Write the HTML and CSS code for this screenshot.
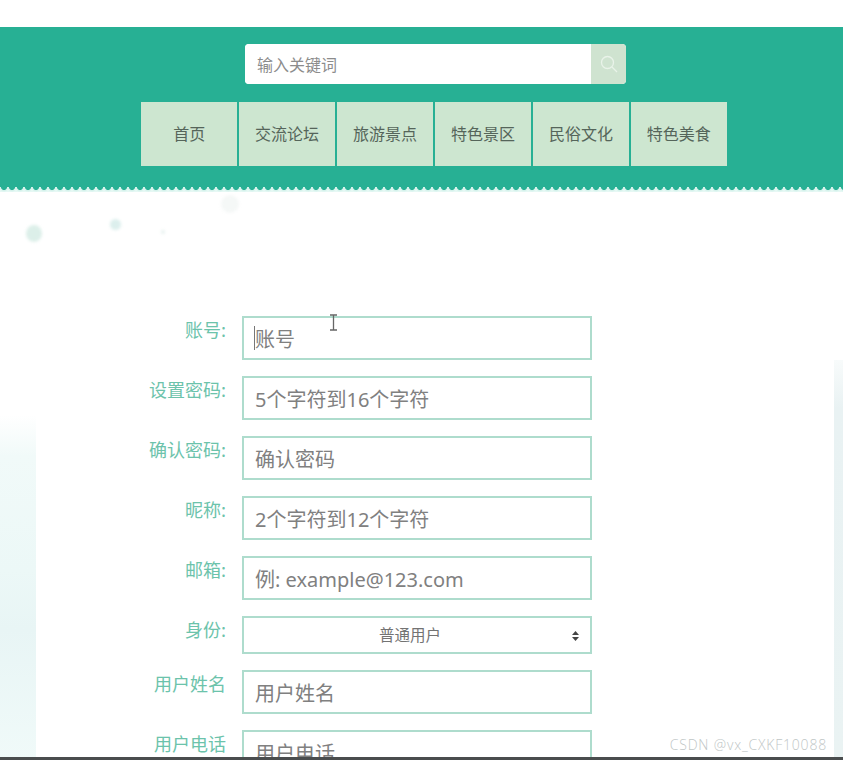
FILE: index.html
```html
<!DOCTYPE html>
<html lang="zh-CN">
<head>
<meta charset="utf-8">
<title>注册</title>
<link rel="stylesheet" href="styles.css">
</head>
<body>
<div class="page">
  <header class="header">
    <form class="search">
      <input class="search-input" type="text" placeholder="输入关键词">
      <button class="search-btn" type="button" aria-label="搜索">
        <svg width="20" height="20" viewBox="0 0 20 20" fill="none" stroke="#e9f3e9" stroke-width="1.3"><circle cx="8.5" cy="8.5" r="6"/><path d="M13 13l5 5"/></svg>
      </button>
    </form>
    <nav class="nav">
      <a class="nav-item">首页</a>
      <a class="nav-item">交流论坛</a>
      <a class="nav-item">旅游景点</a>
      <a class="nav-item">特色景区</a>
      <a class="nav-item">民俗文化</a>
      <a class="nav-item">特色美食</a>
    </nav>
  </header>
  <div class="scallop"></div>
  <main class="main">
    <div class="paint paint-left"></div>
    <div class="paint paint-right"></div>
    <div class="spot spot-a"></div>
    <div class="spot spot-b"></div>
    <div class="spot spot-c"></div>
    <div class="spot spot-d"></div>
    <form class="form">
      <div class="row"><label class="label">账号:</label><input class="field" placeholder="账号"><span class="caret"></span></div>
      <div class="row"><label class="label">设置密码:</label><input class="field" placeholder="5个字符到16个字符"></div>
      <div class="row"><label class="label">确认密码:</label><input class="field" placeholder="确认密码"></div>
      <div class="row"><label class="label">昵称:</label><input class="field" placeholder="2个字符到12个字符"></div>
      <div class="row"><label class="label">邮箱:</label><input class="field" placeholder="例: example@123.com"></div>
      <div class="row row-select"><label class="label">身份:</label>
        <div class="select"><span class="select-text">普通用户</span>
          <svg class="arrows" width="7" height="10" viewBox="0 0 7 10" fill="#444"><path d="M3.5 0L7 4H0zM3.5 10L0 6h7z"/></svg>
        </div>
      </div>
      <div class="row"><label class="label">用户姓名</label><input class="field" placeholder="用户姓名"></div>
      <div class="row"><label class="label">用户电话</label><input class="field" placeholder="用户电话"></div>
    </form>
  </main>
  <svg class="cursor" width="9" height="17" viewBox="0 0 9 17" fill="none" stroke="#666" stroke-width="1.3"><path d="M1 1h7M1 16h7M4.5 1v15"/></svg>
  <div class="watermark">CSDN @vx_CXKF10088</div>
  <div class="bottom-bar"></div>
</div>
</body>
</html>
```
FILE: styles.css
```css
* { box-sizing: border-box; }
html, body { margin: 0; height: 100%; overflow: hidden; background: #fff; }
body { font-family: "Liberation Sans", "Noto Sans CJK SC", sans-serif; }
.page { position: relative; height: 760px; overflow: hidden; padding-top: 27px; }

.header { height: 160px; background: #27b094; padding-top: 17px; display: flex; flex-direction: column; align-items: flex-start; }
.search { width: 381px; height: 40px; margin-left: 245px; display: flex; border-radius: 4px; overflow: hidden; background: #fff; }
.search-input { flex: 1; min-width: 0; border: 0; outline: 0; padding: 0 12px; font: 16px "Noto Sans CJK SC", sans-serif; color: #777; background: #fff; }
.search-input::placeholder { color: #8c8c8c; opacity: 1; }
.search-btn { width: 35px; border: 0; padding: 0; background: #cfe3d0; display: flex; align-items: center; justify-content: center; }
.nav { margin: 18px 0 0 141px; width: 586px; height: 64px; display: flex; gap: 1.6px; }
.nav-item { flex: 1; display: flex; align-items: center; justify-content: center; padding-bottom: 2px; background: #cde6d0; color: #55655a; font: 400 16px "Noto Sans CJK SC", sans-serif; }

.scallop { height: 5px; background: radial-gradient(circle at 4px 0, #27b094 2.6px, #d2f1ea 3.4px, #e6f8f4 5px) 0 0 / 8px 5px repeat-x; }

.main { position: relative; height: 568px; padding-top: 124px; background: #fff; }
.paint { position: absolute; pointer-events: none; }
.paint-left { left: 0; top: 223px; width: 36px; height: 345px; background: linear-gradient(180deg, #fff 0, #f1faf9 12%, #ecf8f7 45%, #e8f5f5 62%, #f0faf9 100%); }
.paint-right { right: 0; top: 168px; width: 9px; height: 400px; background: linear-gradient(180deg, #f8fbfb 0, #e9f2f3 12%, #eaf3f3 100%); }
.spot { position: absolute; border-radius: 50%; filter: blur(1.5px); }
.spot-a { left: 26px; top: 33px; width: 16px; height: 17px; background: #dcefe9; }
.spot-b { left: 110px; top: 27px; width: 11px; height: 11px; background: #dcefed; }
.spot-c { left: 221px; top: 3px; width: 18px; height: 18px; background: #f5f8f7; }
.spot-d { left: 161px; top: 38px; width: 4px; height: 4px; background: #e6f0ee; }

.form { position: relative; display: flex; flex-direction: column; gap: 16px; padding-left: 242px; }
.row { position: relative; display: flex; align-items: flex-start; }
.label { position: absolute; right: calc(100% + 16px); top: 1px; white-space: nowrap; color: #6cc3ab; font: 18px/24px "Noto Sans CJK SC", sans-serif; }
.field { width: 350px; height: 44px; border: 2px solid #aedccd; outline: 0; padding: 2px 11px 0; background: #fff; color: #555; font: 20px "Noto Sans", "Noto Sans CJK SC", sans-serif; }
.field::placeholder { color: #808080; opacity: 1; }
.caret { position: absolute; left: 12px; top: 10px; width: 1px; height: 24px; background: #777; }
.select { position: relative; width: 350px; height: 38px; border: 2px solid #aedccd; background: #fff; display: flex; align-items: center; justify-content: center; color: #737373; font: 15.5px "Noto Sans CJK SC", sans-serif; }
.select-text { padding-right: 14px; padding-bottom: 2px; }
.arrows { position: absolute; right: 11px; top: 13px; }

.cursor { position: absolute; left: 329px; top: 314px; }
.watermark { position: absolute; right: 16px; top: 735px; color: #c0c6c6; font: 300 14px "Open Sans", sans-serif; letter-spacing: .8px; }
.bottom-bar { position: absolute; left: 0; right: 0; bottom: 0; height: 3px; background: #4a4d4e; }
```
